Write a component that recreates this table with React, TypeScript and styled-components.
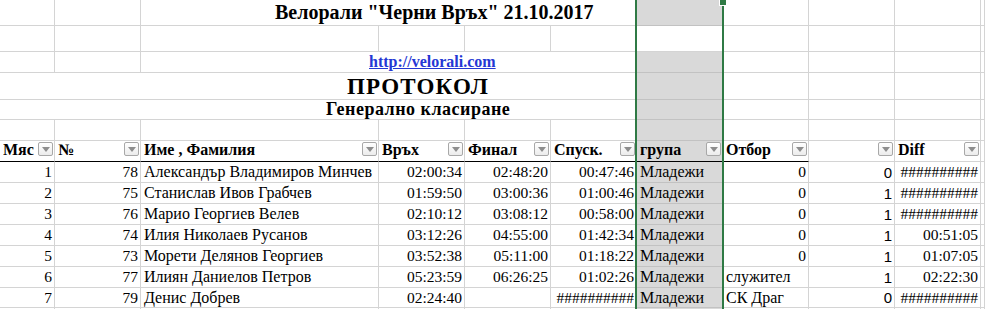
import React from "react"
import styled, { createGlobalStyle } from "styled-components"

const GlobalStyle = createGlobalStyle`
  html, body {
    margin: 0;
    padding: 0;
    background: #fff;
  }
`

const GRID = "#d4d4d4"
const GREEN = "#2f7a45"

const Sheet = styled.div`
  position: relative;
  width: 985px;
  height: 309px;
  overflow: hidden;
  display: grid;
  grid-template-columns: 55px 86px 238px repeat(7, 86px) 1fr;
  grid-template-rows: 26px 26px 21px 27px 20px 21px 21px 21px 21px 21px 21px 21px 21px 20px 20px;
  font-family: "Liberation Serif", "Times New Roman", serif;
  font-size: 15.5px;
  color: #000;
`

const Cell = styled.div<{
  $span?: number
  $align?: "left" | "right"
  $sel?: boolean
  $head?: boolean
  $sans?: boolean
}>`
  grid-column: span ${p => p.$span || 1};
  box-sizing: border-box;
  display: flex;
  align-items: center;
  justify-content: ${p => (p.$align === "right" ? "flex-end" : "flex-start")};
  padding: 0 ${p => (p.$align === "right" ? "2px" : "0")} 0 ${p => (p.$align === "right" ? "0" : "3px")};
  overflow: hidden;
  white-space: nowrap;
  background: ${p => (p.$sel ? "#d9d9d9" : "#fff")};
  border-right: 1px solid ${p => (p.$sel ? "#c2c2c2" : GRID)};
  border-bottom: 1px solid ${p => (p.$head ? "#000" : p.$sel ? "#c2c2c2" : GRID)};
  font-family: ${p =>
    p.$sans ? '"Liberation Sans", Arial, sans-serif' : '"Liberation Serif", "Times New Roman", serif'};
  font-size: ${p => (p.$sans ? "15px" : p.$align === "right" ? "15.5px" : "16px")};
`

const Title = styled.span`
  padding-left: 131px;
  font-size: 20px;
  font-weight: 700;
`

const SiteLink = styled.a`
  padding-left: 225px;
  font-size: 16px;
  font-weight: 700;
  color: #2437d4;
  text-decoration: underline;
`

const Protocol = styled.span`
  padding-left: 347px;
  font-size: 23px;
  letter-spacing: 1.2px;
  font-weight: 700;
  margin-top: 1px;
`

const Subtitle = styled.span`
  padding-left: 326px;
  font-size: 18px;
  letter-spacing: 0.5px;
  font-weight: 700;
`

const HeadText = styled.span`
  flex: 1;
  min-width: 0;
  overflow: hidden;
  font-weight: 700;
  font-size: 16px;
  margin-top: -3px;
`

const FilterButton = styled.span`
  flex: none;
  width: 15px;
  height: 14px;
  box-sizing: border-box;
  margin: -4px 1px 0 0;
  border: 1px solid #a8a8a8;
  border-radius: 2px;
  background: linear-gradient(#ffffff, #ececec);
  display: flex;
  align-items: center;
  justify-content: center;

  &::after {
    content: "";
    border-left: 4px solid transparent;
    border-right: 4px solid transparent;
    border-top: 5px solid #8d8d8d;
  }
`

const SelectionFrame = styled.div`
  position: absolute;
  top: 0;
  bottom: 0;
  left: 635px;
  width: 89px;
  box-sizing: border-box;
  border-left: 2px solid ${GREEN};
  border-right: 2px solid ${GREEN};
  pointer-events: none;
`

const FillHandle = styled.div`
  position: absolute;
  top: -2px;
  right: -5px;
  width: 6px;
  height: 6px;
  background: ${GREEN};
  border: 1px solid #fff;
`

const SEL_COL = 6
const COUNT = 11

type Row = (string | number)[]

const rows: Row[] = [
  [1, 78, "Александър Владимиров Минчев", "02:00:34", "02:48:20", "00:47:46", "Младежи", 0, 0, "##########"],
  [2, 75, "Станислав Ивов Грабчев", "01:59:50", "03:00:36", "01:00:46", "Младежи", 0, 1, "##########"],
  [3, 76, "Марио Георгиев Велев", "02:10:12", "03:08:12", "00:58:00", "Младежи", 0, 1, "##########"],
  [4, 74, "Илия Николаев Русанов", "03:12:26", "04:55:00", "01:42:34", "Младежи", 0, 1, "00:51:05"],
  [5, 73, "Морети Делянов Георгиев", "03:52:38", "05:11:00", "01:18:22", "Младежи", 0, 1, "01:07:05"],
  [6, 77, "Илиян Даниелов Петров", "05:23:59", "06:26:25", "01:02:26", "Младежи", "служител", 1, "02:22:30"],
  [7, 79, "Денис Добрев", "02:24:40", "", "##########", "Младежи", "СК Драг", 0, "##########"],
]

const headers = ["Мяс", "№", "Име , Фамилия", "Връх", "Финал", "Спуск.", "група", "Отбор", "", "Diff"]

// cells from column `from` up to the end of the row, all empty
const blanks = (from: number, key: string, white?: number) =>
  Array.from({ length: COUNT - from }, (_, i) => {
    const col = from + i
    return <Cell key={key + col} $sel={col === SEL_COL && white !== col} />
  })

const isLeft = (v: string | number) =>
  typeof v === "string" && !/^[\d:#]+$/.test(v)

const App = () => {
  return (
    <>
      <GlobalStyle />
      <Sheet>
        {/* row 1 – title */}
        <Cell />
        <Cell />
        <Cell $span={4}>
          <Title>Велорали "Черни Връх" 21.10.2017</Title>
        </Cell>
        {blanks(6, "r1")}

        {/* row 2 – empty, active cell in G */}
        {blanks(0, "r2", SEL_COL)}

        {/* row 3 – link */}
        <Cell />
        <Cell />
        <Cell $span={4}>
          <SiteLink href="#">http://velorali.com</SiteLink>
        </Cell>
        {blanks(6, "r3")}

        {/* row 4 */}
        <Cell $span={6} style={{ paddingLeft: 0 }}>
          <Protocol>ПРОТОКОЛ</Protocol>
        </Cell>
        {blanks(6, "r4")}

        {/* row 5 */}
        <Cell $span={6} style={{ paddingLeft: 0 }}>
          <Subtitle>Генерално класиране</Subtitle>
        </Cell>
        {blanks(6, "r5")}

        {/* row 6 */}
        {blanks(0, "r6")}

        {/* header */}
        {headers.map((h, i) => (
          <Cell key={"h" + i} $sel={i === SEL_COL} $head={i < 8}>
            <HeadText>{h}</HeadText>
            <FilterButton />
          </Cell>
        ))}
        <Cell />

        {/* data */}
        {rows.map((r, ri) => (
          <React.Fragment key={"d" + ri}>
            {r.map((v, ci) => (
              <Cell
                key={ci}
                $sel={ci === SEL_COL}
                $sans={ci === 8}
                $align={isLeft(v) ? "left" : "right"}
              >
                {v}
              </Cell>
            ))}
            <Cell />
          </React.Fragment>
        ))}

        {blanks(0, "r15")}

        <SelectionFrame>
          <FillHandle />
        </SelectionFrame>
      </Sheet>
    </>
  )
}

export default App
